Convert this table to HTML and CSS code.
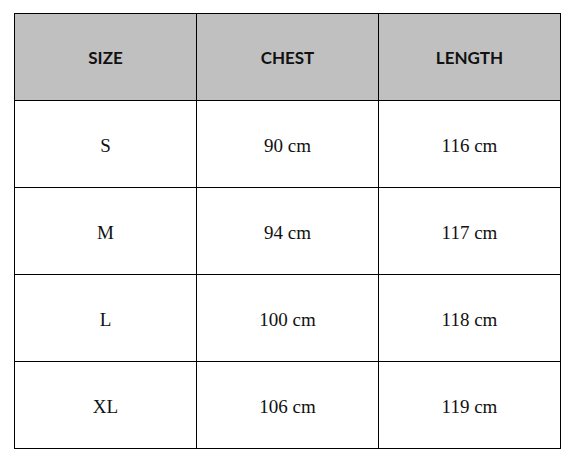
FILE: index.html
```html
<!DOCTYPE html>
<html>
<head>
<meta charset="utf-8">
<link rel="stylesheet" href="styles.css">
</head>
<body>
<div class="wrap">
<table class="sizes">
<colgroup><col class="c"><col class="c"><col class="c"></colgroup>
<thead>
<tr><th>SIZE</th><th>CHEST</th><th>LENGTH</th></tr>
</thead>
<tbody>
<tr><td>S</td><td>90 cm</td><td>116 cm</td></tr>
<tr><td>M</td><td>94 cm</td><td>117 cm</td></tr>
<tr><td>L</td><td>100 cm</td><td>118 cm</td></tr>
<tr><td>XL</td><td>106 cm</td><td>119 cm</td></tr>
</tbody>
</table>
</div>
</body>
</html>
```
FILE: styles.css
```css
html, body {
  margin: 0;
  padding: 0;
  background: #fff;
}
.wrap {
  padding: 13px 0 0 14px;
}
.sizes {
  border-collapse: collapse;
  table-layout: fixed;
  width: 546px;
}
.sizes .c {
  width: 182px;
}
.sizes th, .sizes td {
  border: 1px solid #000;
  height: 86px;
  padding: 0;
  text-align: center;
  vertical-align: middle;
}
.sizes th {
  background: #c0c0c0;
  font-family: Lato, "Open Sans", sans-serif;
  font-weight: 700;
  font-size: 17px;
  color: #111;
}
.sizes td {
  font-family: "Liberation Serif", serif;
  font-size: 19px;
  color: #111;
  height: 83px;
  padding-top: 3px;
}
```
